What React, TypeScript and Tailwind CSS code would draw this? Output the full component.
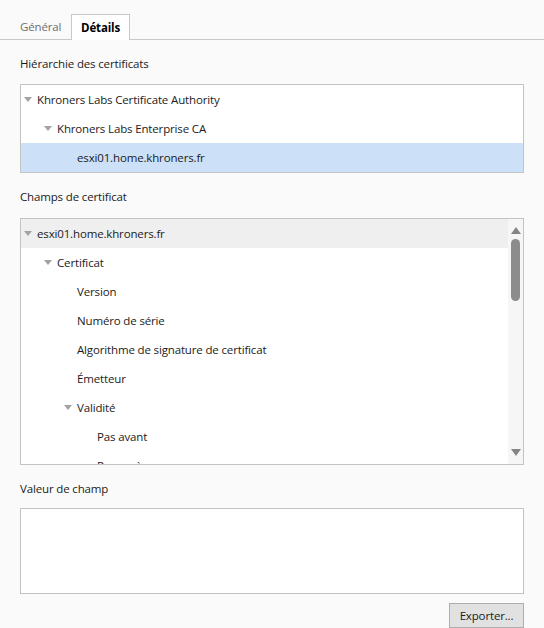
import React from 'react';

const font = { fontFamily: '"Segoe UI", "Open Sans", "Noto Sans", sans-serif', letterSpacing: '-0.15px' };

interface Node {
  label: string;
  level: number;
  expanded?: boolean;
}

const hierarchy: Node[] = [
  { label: 'Khroners Labs Certificate Authority', level: 0, expanded: true },
  { label: 'Khroners Labs Enterprise CA', level: 1, expanded: true },
  { label: 'esxi01.home.khroners.fr', level: 2 },
];

const fields: Node[] = [
  { label: 'esxi01.home.khroners.fr', level: 0, expanded: true },
  { label: 'Certificat', level: 1, expanded: true },
  { label: 'Version', level: 2 },
  { label: 'Numéro de série', level: 2 },
  { label: 'Algorithme de signature de certificat', level: 2 },
  { label: 'Émetteur', level: 2 },
  { label: 'Validité', level: 2, expanded: true },
  { label: 'Pas avant', level: 3 },
  { label: 'Pas après', level: 3 },
];

const indents = ['pl-[16px]', 'pl-[36px]', 'pl-[56px]', 'pl-[76px]'];

const Caret = () => (
  <svg width="8" height="5" viewBox="0 0 8 5" className="absolute -ml-[13px]">
    <path d="M0 0 L8 0 L4 5 Z" fill="#a3a3a3" />
  </svg>
);

const Row: React.FC<{ node: Node; className?: string }> = ({ node, className }) => (
  <div className={`relative flex items-center h-[29px] shrink-0 ${indents[node.level]} ${className ?? ''}`}>
    {node.expanded && <Caret />}
    <span className="whitespace-nowrap">{node.label}</span>
  </div>
);

const ScrollArrow = ({ up }: { up?: boolean }) => (
  <svg width="10" height="7" viewBox="0 0 10 7">
    <path d={up ? 'M0 7 L10 7 L5 0 Z' : 'M0 0 L10 0 L5 7 Z'} fill="#858585" />
  </svg>
);

export default function App() {
  return (
    <div className="w-[544px] h-[628px] bg-[#fafafa] text-[11.5px] text-[#1b1b1b] overflow-hidden" style={font}>
      {/* Tabs */}
      <div className="flex items-end h-[40px] border-b border-[#c8c8c8] px-5">
        <div className="h-[25px] w-[51px] flex items-center text-[#6e6e6e]">Général</div>
        <div className="h-[26px] w-[59px] -mb-px flex items-center justify-center bg-white border border-b-0 border-[#c8c8c8] font-bold text-black">
          Détails
        </div>
      </div>

      <div className="px-5">
        <div className="mt-[16px] h-[16px] leading-[16px]">Hiérarchie des certificats</div>
        <div className="mt-[12px] h-[89px] bg-white border border-[#c3c3c3] flex flex-col">
          <Row node={hierarchy[0]} />
          <Row node={hierarchy[1]} />
          <Row node={hierarchy[2]} className="bg-[#cce0f8]" />
        </div>

        <div className="mt-[16px] h-[16px] leading-[16px]">Champs de certificat</div>
        <div className="mt-[13px] h-[247px] bg-white border border-[#c3c3c3] flex overflow-hidden">
          <div className="flex-1 flex flex-col overflow-hidden">
            {fields.map((f, i) => (
              <Row key={i} node={f} className={i === 0 ? 'bg-[#efefef]' : ''} />
            ))}
          </div>
          <div className="w-[15px] bg-[#f6f6f6] flex flex-col items-center pt-[8px] pb-[8px]">
            <ScrollArrow up />
            <div className="mt-[5px] w-[9px] h-[62px] rounded-full bg-[#8c8c8c]" />
            <div className="flex-1" />
            <ScrollArrow />
          </div>
        </div>

        <div className="mt-[16px] h-[16px] leading-[16px]">Valeur de champ</div>
        <div className="mt-[11px] h-[86px] bg-white border border-[#c3c3c3]" />

        <div className="flex justify-end mt-[9px]">
          <button className="h-[25px] w-[75px] border border-[#adadad] bg-[#e1e1e1] text-[11.5px] text-[#1b1b1b]" style={font}>
            Exporter...
          </button>
        </div>
      </div>
    </div>
  );
}
